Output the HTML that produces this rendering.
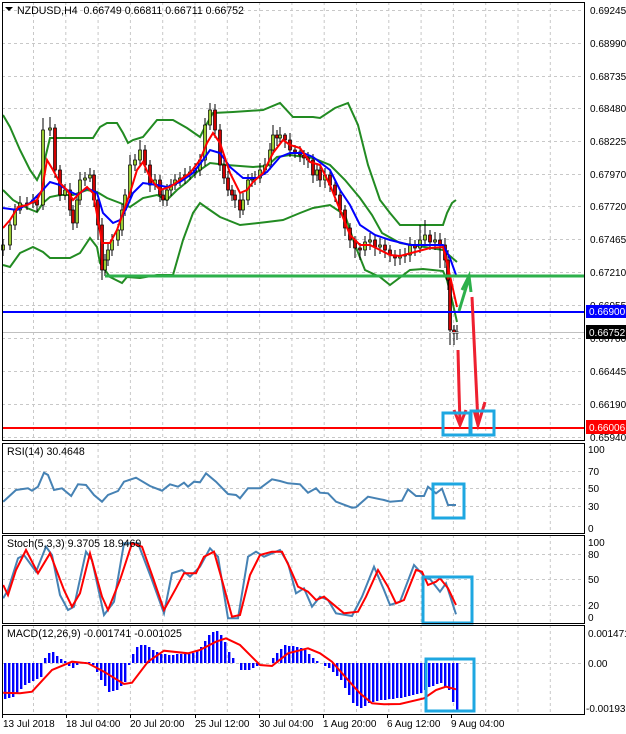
<!DOCTYPE html>
<html><head><meta charset="utf-8"><style>
html,body{margin:0;padding:0;background:#fff;}
svg{display:block;font-family:"Liberation Sans",sans-serif;font-size:10px;}
.gd{stroke:#c8c8c8;stroke-dasharray:3,3;fill:none;}
.g{fill:#9acd32;stroke:#000;stroke-width:.7}
.r{fill:#d00000;stroke:#000;stroke-width:.7}
.tt{font-size:10.6px}
</style></head><body>
<svg width="626" height="734" xmlns="http://www.w3.org/2000/svg">
<g class="gd">
<path d="M33.5 2V440M65.8 2V440M98.1 2V440M130.4 2V440M162.7 2V440M195 2V440M227.3 2V440M259.6 2V440M291.9 2V440M324.2 2V440M356.5 2V440M388.8 2V440M421.1 2V440M453.4 2V440M485.7 2V440M518 2V440M550.3 2V440"/>
<path d="M33.5 443V533M65.8 443V533M98.1 443V533M130.4 443V533M162.7 443V533M195 443V533M227.3 443V533M259.6 443V533M291.9 443V533M324.2 443V533M356.5 443V533M388.8 443V533M421.1 443V533M453.4 443V533M485.7 443V533M518 443V533M550.3 443V533"/>
<path d="M33.5 535V623M65.8 535V623M98.1 535V623M130.4 535V623M162.7 535V623M195 535V623M227.3 535V623M259.6 535V623M291.9 535V623M324.2 535V623M356.5 535V623M388.8 535V623M421.1 535V623M453.4 535V623M485.7 535V623M518 535V623M550.3 535V623"/>
<path d="M33.5 625V713M65.8 625V713M98.1 625V713M130.4 625V713M162.7 625V713M195 625V713M227.3 625V713M259.6 625V713M291.9 625V713M324.2 625V713M356.5 625V713M388.8 625V713M421.1 625V713M453.4 625V713M485.7 625V713M518 625V713M550.3 625V713"/>
<path d="M2 10.5H584M2 43.5H584M2 76.5H584M2 108.5H584M2 141.5H584M2 174.5H584M2 206.5H584M2 239.5H584M2 272.5H584M2 305.5H584M2 338.5H584M2 371.5H584M2 404.5H584M2 437.5H584"/>
<path d="M2 471.5H584M2 488.5H584M2 506.5H584M2 554.5H584M2 579.5H584M2 605.5H584M2 663.5H584"/>
</g>
<g fill="none" stroke="#228b22" stroke-width="2">
<polyline points="3,115 10,127 20,150 30,170 37,180 43,167 50,138 93,138 100,127 107,123 117,123 123,133 128,143 133,140 143,137 157,120 173,120 187,128 200,137 205,127 213,113 233,112 263,110 280,103 293,117 313,117 320,118 335,108 348,103 358,125 368,165 380,200 390,213 400,225 443,225 447,213 452,203 456,200"/>
<polyline points="3,190 13,200 27,208 37,212 43,203 50,197 60,195 73,195 87,190 97,192 107,198 120,203 130,207 143,198 157,195 167,200 177,190 187,182 197,172 210,163 227,165 253,167 267,166 277,157 290,155 313,158 330,165 345,180 360,198 372,215 382,233 400,243 443,250 457,262"/>
<polyline points="3,265 10,267 20,253 33,247 43,252 50,258 70,258 80,253 90,238 97,247 100,263 110,277 122,283 127,277 140,278 157,275 173,275 183,240 193,213 200,203 207,208 220,217 240,225 267,222 283,220 300,213 313,208 330,205 345,215 355,245 365,270 380,277 390,285 410,270 423,269 443,271 447,280 452,300 457,322"/>
</g>
<path stroke="#000" stroke-width="1" fill="none" d="M3 239V256M10 219V250M15 204V230M20 196V214M27 197V210M33 194V208M37 195V212M43 118V210M50 117V136M55 124V178M60 165V201M65 184V200M70 183V216M73 205V230M77 194V228M80 172V205M85 172V186M90 168V182M94 170V207M98 196V240M102 218V280M105 254V276M108 244V266M112 234V256M118 224V246M122 204V236M125 189V216M130 155V200M135 154V171M140 140V165M145 145V173M150 160V192M155 174V190M160 175V202M163 190V206M167 184V206M171 179V196M175 174V190M180 172V186M185 168V184M190 166V180M195 163V178M200 154V176M205 118V166M210 103V130M215 104V138M220 124V171M224 160V184M228 171V196M232 185V201M235 190V208M240 193V218M243 193V215M248 174V205M252 173V187M255 171V185M260 163V183M265 158V175M270 143V170M273 125V155M277 130V146M280 127V144M285 133V148M290 133V157M295 145V158M300 146V162M304 150V165M308 152V168M313 154V183M317 163V181M320 165V187M325 168V188M330 170V192M335 180V202M340 190V218M345 205V236M350 223V248M355 236V258M360 243V260M365 236V256M370 233V250M375 235V256M380 238V254M385 238V258M390 245V262M395 250V266M400 249V265M405 248V263M410 237V262M415 240V256M420 225V253M425 220V244M430 230V250M435 232V250M440 233V268M445 238V268M448 250V290M450 275V345M454 325V345M457 325V340"/>
<g>
<rect class="g" x="1.5" y="245" width="3" height="5"/><rect class="g" x="8.5" y="225" width="3" height="20"/><rect class="g" x="13.5" y="210" width="3" height="15"/><rect class="g" x="18.5" y="203" width="3" height="7"/><rect class="r" x="25.5" y="203" width="3" height="2"/><rect class="g" x="31.5" y="200" width="3" height="3"/><rect class="r" x="35.5" y="200" width="3" height="5"/><rect class="g" x="41.5" y="130" width="3" height="75"/><rect class="g" x="48.5" y="128" width="3" height="2"/><rect class="r" x="53.5" y="128" width="3" height="42"/><rect class="r" x="58.5" y="170" width="3" height="25"/><rect class="g" x="63.5" y="190" width="3" height="5"/><rect class="r" x="68.5" y="190" width="3" height="20"/><rect class="r" x="71.5" y="210" width="3" height="13"/><rect class="g" x="75.5" y="200" width="3" height="23"/><rect class="g" x="78.5" y="180" width="3" height="20"/><rect class="g" x="83.5" y="178" width="3" height="2"/><rect class="g" x="88.5" y="175" width="3" height="3"/><rect class="r" x="92.5" y="175" width="3" height="25"/><rect class="r" x="96.5" y="200" width="3" height="25"/><rect class="r" x="100.5" y="225" width="3" height="45"/><rect class="g" x="103.5" y="260" width="3" height="10"/><rect class="g" x="106.5" y="250" width="3" height="10"/><rect class="g" x="110.5" y="240" width="3" height="10"/><rect class="g" x="116.5" y="230" width="3" height="10"/><rect class="g" x="120.5" y="210" width="3" height="20"/><rect class="g" x="123.5" y="195" width="3" height="15"/><rect class="g" x="128.5" y="165" width="3" height="30"/><rect class="g" x="133.5" y="160" width="3" height="5"/><rect class="g" x="138.5" y="150" width="3" height="10"/><rect class="r" x="143.5" y="150" width="3" height="15"/><rect class="r" x="148.5" y="165" width="3" height="20"/><rect class="g" x="153.5" y="180" width="3" height="5"/><rect class="r" x="158.5" y="180" width="3" height="15"/><rect class="r" x="161.5" y="195" width="3" height="5"/><rect class="g" x="165.5" y="190" width="3" height="10"/><rect class="g" x="169.5" y="185" width="3" height="5"/><rect class="g" x="173.5" y="180" width="3" height="5"/><rect class="g" x="178.5" y="178" width="3" height="2"/><rect class="g" x="183.5" y="175" width="3" height="3"/><rect class="g" x="188.5" y="172" width="3" height="3"/><rect class="g" x="193.5" y="170" width="3" height="2"/><rect class="g" x="198.5" y="160" width="3" height="10"/><rect class="g" x="203.5" y="125" width="3" height="35"/><rect class="g" x="208.5" y="110" width="3" height="15"/><rect class="r" x="213.5" y="110" width="3" height="20"/><rect class="r" x="218.5" y="130" width="3" height="35"/><rect class="r" x="222.5" y="165" width="3" height="13"/><rect class="r" x="226.5" y="178" width="3" height="12"/><rect class="r" x="230.5" y="190" width="3" height="5"/><rect class="r" x="233.5" y="195" width="3" height="5"/><rect class="r" x="238.5" y="200" width="3" height="10"/><rect class="g" x="241.5" y="200" width="3" height="10"/><rect class="g" x="246.5" y="180" width="3" height="20"/><rect class="g" x="250.5" y="179" width="3" height="1"/><rect class="g" x="253.5" y="178" width="3" height="1"/><rect class="g" x="258.5" y="170" width="3" height="8"/><rect class="g" x="263.5" y="165" width="3" height="5"/><rect class="g" x="268.5" y="150" width="3" height="15"/><rect class="g" x="271.5" y="135" width="3" height="15"/><rect class="r" x="275.5" y="135" width="3" height="3"/><rect class="g" x="278.5" y="135" width="3" height="3"/><rect class="r" x="283.5" y="135" width="3" height="5"/><rect class="r" x="288.5" y="140" width="3" height="10"/><rect class="r" x="293.5" y="150" width="3" height="2"/><rect class="r" x="298.5" y="152" width="3" height="3"/><rect class="r" x="302.5" y="155" width="3" height="3"/><rect class="r" x="306.5" y="158" width="3" height="2"/><rect class="r" x="311.5" y="160" width="3" height="15"/><rect class="g" x="315.5" y="170" width="3" height="5"/><rect class="r" x="318.5" y="170" width="3" height="10"/><rect class="g" x="323.5" y="175" width="3" height="5"/><rect class="r" x="328.5" y="175" width="3" height="10"/><rect class="r" x="333.5" y="185" width="3" height="10"/><rect class="r" x="338.5" y="195" width="3" height="15"/><rect class="r" x="343.5" y="210" width="3" height="18"/><rect class="r" x="348.5" y="228" width="3" height="12"/><rect class="r" x="353.5" y="240" width="3" height="8"/><rect class="r" x="358.5" y="248" width="3" height="2"/><rect class="g" x="363.5" y="242" width="3" height="8"/><rect class="g" x="368.5" y="240" width="3" height="2"/><rect class="r" x="373.5" y="240" width="3" height="7"/><rect class="g" x="378.5" y="245" width="3" height="2"/><rect class="r" x="383.5" y="245" width="3" height="5"/><rect class="r" x="388.5" y="250" width="3" height="5"/><rect class="r" x="393.5" y="255" width="3" height="3"/><rect class="g" x="398.5" y="256" width="3" height="2"/><rect class="g" x="403.5" y="255" width="3" height="1"/><rect class="g" x="408.5" y="245" width="3" height="10"/><rect class="r" x="413.5" y="245" width="3" height="3"/><rect class="g" x="418.5" y="240" width="3" height="8"/><rect class="g" x="423.5" y="235" width="3" height="5"/><rect class="r" x="428.5" y="235" width="3" height="7"/><rect class="g" x="433.5" y="240" width="3" height="2"/><rect class="r" x="438.5" y="240" width="3" height="5"/><rect class="r" x="443.5" y="245" width="3" height="15"/><rect class="r" x="446.5" y="260" width="3" height="20"/><rect class="r" x="448.5" y="280" width="3" height="50"/><rect class="r" x="452.5" y="330" width="3" height="3"/><rect class="g" x="455.5" y="332" width="3" height="1"/>
</g>
<polyline fill="none" stroke="#0000ff" stroke-width="2" points="3,208 17,210 30,203 40,193 50,182 60,185 67,190 77,195 87,188 97,193 103,213 113,223 120,220 127,207 133,193 143,183 157,185 167,187 180,182 193,173 203,160 210,150 220,153 230,167 243,178 257,178 267,172 280,157 290,153 303,153 313,157 330,170 340,190 350,205 360,225 375,235 390,240 410,245 430,245 443,245 450,258 456,275"/>
<polyline fill="none" stroke="#ff0000" stroke-width="2" points="3,228 10,220 18,207 27,205 37,200 42,190 47,160 53,170 60,183 67,190 73,200 80,193 87,187 93,193 98,220 102,243 110,243 117,230 123,213 130,193 137,170 143,162 148,173 153,182 160,190 170,187 180,180 190,173 200,160 207,143 213,133 220,143 230,173 240,193 247,190 253,182 263,173 273,153 283,140 290,145 300,148 310,162 320,165 330,185 340,210 350,235 360,245 370,245 380,250 390,255 400,256 415,252 430,248 443,247 448,267 457,307"/>
<line x1="105" y1="276" x2="584" y2="276" stroke="#2db04b" stroke-width="3"/>
<line x1="2" y1="312" x2="584" y2="312" stroke="#0000ff" stroke-width="2"/>
<line x1="2" y1="332.5" x2="584" y2="332.5" stroke="#c0c0c0"/>
<line x1="2" y1="428" x2="584" y2="428" stroke="#ff0000" stroke-width="2"/>
<g fill="none" stroke="#ee2030" stroke-width="3">
<polyline points="458,350 459,390 460,423"/><polyline points="454,410 460,425 466,410"/>
<polyline points="472,297 475,360 478,423"/><polyline points="474,410 478,425 485,402"/>
</g>
<g fill="none" stroke="#2db04b" stroke-width="3"><polyline points="459,311 469,278"/><polyline points="462,290 469,276 471,292"/></g>
<rect x="443" y="413" width="27" height="22" fill="none" stroke="#1ea7e1" stroke-width="3"/>
<rect x="471" y="411" width="23" height="24" fill="none" stroke="#1ea7e1" stroke-width="3"/>
<path d="M5 7L13 7L9 11Z" fill="#000"/>
<text class="tt" x="17" y="14">NZDUSD,H4&#160; 0.66749 0.66811 0.66711 0.66752</text>
<polyline fill="none" stroke="#4682b4" stroke-width="2" points="3.2,501.7 16,490 28,488.3 32,490.7 38,486.7 44,472.7 48,475 54,490 62,488.3 71.2,496 78,484.3 86,485 94,495 102,501.7 108,495 118,491 124,481.7 136,477.7 150,486 162,490.7 170,484.3 178,486.7 184,482.7 188,486.7 194,481.7 200,482.3 206,473.3 216,481.7 228,494 236,495 240,498.3 248,488.3 260,488.3 272,479.3 280,481 288,483.3 300,484.3 308,492.7 316,488.3 320,492.7 328,493.3 336,501.7 352,507.7 356,507.3 368,496.7 384,500 390,501.7 402,500.7 408,489.3 416,496 424,496 428,486.7 436,493.3 442,488.7 448,505 456,505"/>
<rect x="433" y="484" width="31" height="34" fill="none" stroke="#1ea7e1" stroke-width="3"/>
<text class="tt" x="7" y="455">RSI(14) 30.4648</text>
<polyline fill="none" stroke="#4682b4" stroke-width="2" points="3.2,598.3 8,590 18,558.3 24,555 36,571.7 46,546.7 52,555 60,595 68,610 74,606.7 86,551.7 92,560 104,615 114,601.7 124,543.3 138,543.3 152,580 164,613.3 172,573.3 182,570 190,576.7 200,566.7 210,548.3 218,556.7 228,618.3 238,618.3 248,556.7 256,551.7 264,556.7 280,550 288,563.3 296,593.3 304,588.3 312,606.7 320,596.7 328,600 336,613.3 352,616 362,596.7 374,566.7 384,590 390,605 400,601.7 414,565 426,578.3 430,579 440,591.7 446,583.3 456,614.3"/>
<polyline fill="none" stroke="#ff0000" stroke-width="2" points="3.2,585 8,595 16,570 26,550 38,573.3 50,553.3 64,590 72,606.7 80,593.3 90,553.3 102,596.7 108,610 120,580 132,543.3 142,546.7 152,575 164,610 176,588.3 184,573.3 196,573.3 204,556.7 214,551.7 222,580 232,616.7 240,615 250,575 260,555 272,551.7 282,551.7 290,568.3 298,586.7 308,591.7 316,600 324,596.7 332,603.3 344,613.3 358,611.7 366,596.7 378,570 388,586.7 396,603.3 404,600 416,570 422,571.7 428,585 436,581.7 440,578.3 448,588.3 456,605"/>
<rect x="423" y="577" width="49" height="46" fill="none" stroke="#1ea7e1" stroke-width="3"/>
<text class="tt" x="7" y="547">Stoch(5,3,3) 9.3705 18.9469</text>
<path fill="#0000ff" d="M4 699h2.4V663h-2.4zM8 698h2.4V663h-2.4zM12 697h2.4V663h-2.4zM16 693h2.4V663h-2.4zM20 689h2.4V663h-2.4zM24 685h2.4V663h-2.4zM28 683h2.4V663h-2.4zM32 681h2.4V663h-2.4zM36 679h2.4V663h-2.4zM40 677h2.4V663h-2.4zM44 658h2.4V663h-2.4zM48 653h2.4V663h-2.4zM52 652h2.4V663h-2.4zM56 656h2.4V663h-2.4zM60 659h2.4V663h-2.4zM64 661h2.4V663h-2.4zM68 666h2.4V663h-2.4zM72 668h2.4V663h-2.4zM76 665h2.4V663h-2.4zM84 662h2.4V663h-2.4zM88 662h2.4V663h-2.4zM92 665h2.4V663h-2.4zM96 672h2.4V663h-2.4zM100 680h2.4V663h-2.4zM104 686h2.4V663h-2.4zM108 692h2.4V663h-2.4zM112 691h2.4V663h-2.4zM116 690h2.4V663h-2.4zM120 686h2.4V663h-2.4zM124 682h2.4V663h-2.4zM128 665h2.4V663h-2.4zM132 654h2.4V663h-2.4zM136 647h2.4V663h-2.4zM140 645h2.4V663h-2.4zM144 645h2.4V663h-2.4zM148 647h2.4V663h-2.4zM152 650h2.4V663h-2.4zM156 652h2.4V663h-2.4zM160 654h2.4V663h-2.4zM164 654h2.4V663h-2.4zM168 655h2.4V663h-2.4zM172 655h2.4V663h-2.4zM176 654h2.4V663h-2.4zM180 654h2.4V663h-2.4zM184 654h2.4V663h-2.4zM188 654h2.4V663h-2.4zM192 653h2.4V663h-2.4zM196 650h2.4V663h-2.4zM200 647h2.4V663h-2.4zM204 641h2.4V663h-2.4zM208 635h2.4V663h-2.4zM212 632h2.4V663h-2.4zM216 631h2.4V663h-2.4zM220 635h2.4V663h-2.4zM224 642h2.4V663h-2.4zM228 652h2.4V663h-2.4zM232 658h2.4V663h-2.4zM240 670h2.4V663h-2.4zM244 670h2.4V663h-2.4zM248 670h2.4V663h-2.4zM252 668h2.4V663h-2.4zM256 666h2.4V663h-2.4zM272 658h2.4V663h-2.4zM276 653h2.4V663h-2.4zM280 649h2.4V663h-2.4zM284 645h2.4V663h-2.4zM288 646h2.4V663h-2.4zM292 646h2.4V663h-2.4zM296 647h2.4V663h-2.4zM300 648h2.4V663h-2.4zM304 650h2.4V663h-2.4zM308 654h2.4V663h-2.4zM312 658h2.4V663h-2.4zM316 661h2.4V663h-2.4zM324 666h2.4V663h-2.4zM328 668h2.4V663h-2.4zM332 672h2.4V663h-2.4zM336 676h2.4V663h-2.4zM340 680h2.4V663h-2.4zM344 688h2.4V663h-2.4zM348 695h2.4V663h-2.4zM352 703h2.4V663h-2.4zM356 706h2.4V663h-2.4zM360 708h2.4V663h-2.4zM364 706h2.4V663h-2.4zM368 703h2.4V663h-2.4zM372 702h2.4V663h-2.4zM376 701h2.4V663h-2.4zM380 700h2.4V663h-2.4zM384 700h2.4V663h-2.4zM388 699h2.4V663h-2.4zM392 699h2.4V663h-2.4zM396 698h2.4V663h-2.4zM400 698h2.4V663h-2.4zM404 697h2.4V663h-2.4zM408 696h2.4V663h-2.4zM412 695h2.4V663h-2.4zM416 694h2.4V663h-2.4zM420 693h2.4V663h-2.4zM424 690h2.4V663h-2.4zM428 687h2.4V663h-2.4zM432 686h2.4V663h-2.4zM436 684h2.4V663h-2.4zM440 683h2.4V663h-2.4zM444 687h2.4V663h-2.4zM448 690h2.4V663h-2.4zM452 702h2.4V663h-2.4zM456 710h2.4V663h-2.4z"/>
<polyline fill="none" stroke="#ff0000" stroke-width="2" points="3.2,692.7 20,693.3 32,691.7 52,670 72,661.7 88,663.3 104,671.7 124,684 132,682.7 148,661.7 164,650.7 188,653.3 200,650 216,641.7 226,638.3 240,645 260,665 272,666 288,653.3 308,648.3 320,653.3 332,661.7 348,680 360,693.3 372,703.3 384,704.3 400,704 424,698.3 436,690 446,686.7 456,689.3"/>
<rect x="426" y="659" width="48" height="52" fill="none" stroke="#1ea7e1" stroke-width="3"/>
<text class="tt" x="7" y="637">MACD(12,26,9) -0.001741 -0.001025</text>
<g fill="none" stroke="#000"><rect x="2.5" y="2.5" width="582" height="438"/><rect x="2.5" y="443.5" width="582" height="90"/><rect x="2.5" y="535.5" width="582" height="88"/><rect x="2.5" y="625.5" width="582" height="89"/></g>
<g fill="#000">
<text x="590" y="14">0.69245</text><text x="590" y="47">0.68990</text><text x="590" y="80">0.68735</text><text x="590" y="112">0.68480</text><text x="590" y="145">0.68225</text><text x="590" y="178">0.67970</text><text x="590" y="210">0.67720</text><text x="590" y="243">0.67465</text><text x="590" y="276">0.67210</text><text x="590" y="309">0.66955</text><text x="590" y="342">0.66700</text><text x="590" y="375">0.66445</text><text x="590" y="408">0.66190</text><text x="590" y="441">0.65940</text>
</g>
<rect x="586" y="305" width="40" height="13" fill="#0000ff"/><text x="589" y="315" fill="#fff">0.66900</text>
<rect x="586" y="325" width="40" height="14" fill="#000"/><text x="589" y="336" fill="#fff">0.66752</text>
<rect x="586" y="420" width="40" height="14" fill="#ff0000"/><text x="589" y="431" fill="#fff">0.66006</text>
<text x="588" y="453">100</text><text x="588" y="475">70</text><text x="588" y="492">50</text><text x="588" y="510">30</text><text x="588" y="532">0</text>
<text x="588" y="546">100</text><text x="588" y="558">80</text><text x="588" y="583">50</text><text x="588" y="609">20</text><text x="588" y="621">0</text>
<text x="588" y="637">0.001471</text><text x="588" y="667">0.00</text><text x="586" y="712">-0.001937</text>
<path stroke="#000" d="M2.5 714V718M66.5 714V718M130.5 714V718M195.5 714V718M259.5 714V718M323.5 714V718M387.5 714V718M451.5 714V718"/>
<text x="3" y="727">13 Jul 2018</text><text x="66" y="727">18 Jul 04:00</text><text x="130" y="727">20 Jul 20:00</text><text x="195" y="727">25 Jul 12:00</text><text x="259" y="727">30 Jul 04:00</text><text x="323" y="727">1 Aug 20:00</text><text x="387" y="727">6 Aug 12:00</text><text x="451" y="727">9 Aug 04:00</text>
</svg>
</body></html>
